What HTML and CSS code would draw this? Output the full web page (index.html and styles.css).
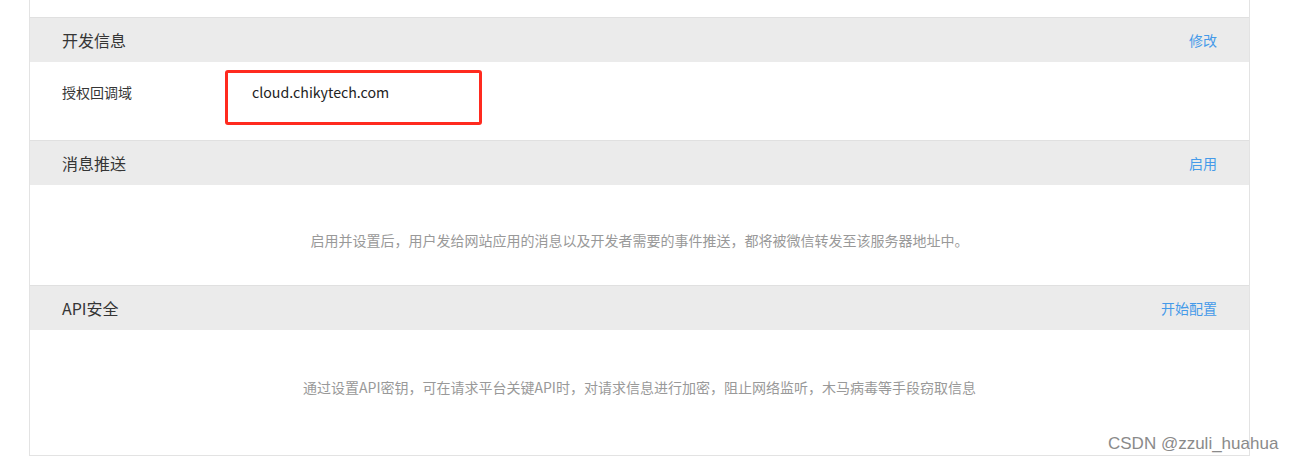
FILE: index.html
```html
<!DOCTYPE html>
<html lang="zh-CN">
<head>
<meta charset="utf-8">
<title>开发信息</title>
<link rel="stylesheet" href="styles.css">
</head>
<body>
<div class="panel">
  <div class="top-rest"></div>

  <div class="sec-head">
    <span class="sec-title">开发信息</span>
    <a class="sec-link" href="#">修改</a>
  </div>
  <div class="sec-row">
    <span class="row-label">授权回调域</span>
    <span class="row-value">cloud.chikytech.com</span>
    <span class="mark-box"></span>
  </div>

  <div class="sec-head">
    <span class="sec-title">消息推送</span>
    <a class="sec-link" href="#">启用</a>
  </div>
  <div class="sec-desc desc-push">启用并设置后，用户发给网站应用的消息以及开发者需要的事件推送，都将被微信转发至该服务器地址中。</div>

  <div class="sec-head">
    <span class="sec-title">API安全</span>
    <a class="sec-link" href="#">开始配置</a>
  </div>
  <div class="sec-desc desc-api">通过设置API密钥，可在请求平台关键API时，对请求信息进行加密，阻止网络监听，木马病毒等手段窃取信息</div>
</div>
<div class="watermark">CSDN @zzuli_huahua</div>
</body>
</html>
```

FILE: styles.css
```css
html, body {
  margin: 0;
  padding: 0;
  background: #ffffff;
}

body {
  font-family: "Noto Sans CJK SC", "Microsoft YaHei", sans-serif;
  color: #353535;
  width: 1289px;
  height: 462px;
  overflow: hidden;
  position: relative;
}

.panel {
  margin-left: 29px;
  width: 1219px;
  border-left: 1px solid #e3e3e3;
  border-right: 1px solid #e3e3e3;
  border-bottom: 1px solid #e3e3e3;
  background: #ffffff;
}

.top-rest {
  height: 17px;
}

.sec-head {
  border-top: 1px solid #e0e0e0;
  background: #ebebeb;
  height: 44px;
  padding: 0 32px;
  display: flex;
  align-items: center;
  justify-content: space-between;
}

.sec-title {
  font-size: 16px;
  line-height: 22px;
  color: #353535;
  margin-top: -1px;
}

.sec-link {
  font-size: 14px;
  line-height: 20px;
  color: #459ae9;
  text-decoration: none;
  margin-top: -1px;
}

.sec-row {
  position: relative;
  height: 78px;
  padding: 0 32px;
  box-sizing: border-box;
  display: flex;
  align-items: flex-start;
  padding-top: 19px;
}

.row-label {
  width: 190px;
  font-size: 14px;
  line-height: 22px;
  color: #353535;
}

.row-value {
  font-size: 14.2px;
  line-height: 22px;
  color: #222222;
}

.mark-box {
  position: absolute;
  left: 195px;
  top: 8px;
  width: 251px;
  height: 49px;
  border: 3px solid #ff2a1f;
  border-radius: 3px;
}

.sec-desc {
  text-align: center;
  font-size: 14px;
  line-height: 20px;
  color: #999999;
  box-sizing: border-box;
}

.desc-push {
  height: 100px;
  padding-top: 45px;
}

.desc-api {
  height: 125px;
  padding-top: 47px;
}

.watermark {
  position: absolute;
  left: 1108px;
  top: 434px;
  font-family: "Liberation Sans", Arial, sans-serif;
  font-size: 17px;
  line-height: 20px;
  color: #8a8a8a;
  text-shadow: 0 0 1px #ffffff;
  white-space: nowrap;
}
```
